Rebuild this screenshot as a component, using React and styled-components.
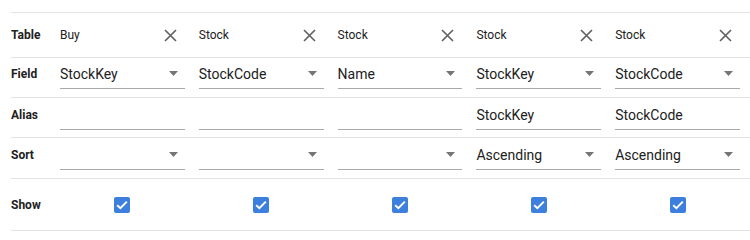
import React from "react";
import styled, { createGlobalStyle } from "styled-components";

const Global = createGlobalStyle`
  html, body { margin: 0; padding: 0; background: #fff; }
  body { font-family: Roboto, "Noto Sans", sans-serif; color: rgba(0,0,0,0.87); }
`;

const Grid = styled.div`
  margin: 12px 0 0 11px;
  width: 739px;
  border-bottom: 1px solid #e3e3e3;
`;

const Row = styled.div`
  display: grid;
  grid-template-columns: 35px repeat(5, 1fr);
  column-gap: 14px;
  padding-right: 10px;
  height: ${(p) => p.$h}px;
  border-top: 1px solid #e3e3e3;
  align-items: ${(p) => p.$align || "center"};
  padding-bottom: ${(p) => p.$pb || 0}px;
  box-sizing: border-box;
`;

const Label = styled.div`
  font-size: 12px;
  font-weight: 700;
  color: #212121;
`;

const InputLabel = styled(Label)`
  display: flex;
  align-items: center;
  height: 28px;
  padding-bottom: 2px;
  box-sizing: border-box;
`;

const Header = styled.div`
  display: flex;
  align-items: center;
  justify-content: space-between;
  font-size: 12px;
  color: #212121;
  padding-right: 8px;
`;

const CloseBtn = styled.svg`
  width: 13px;
  height: 13px;
  display: block;
`;

const Field = styled.div`
  display: flex;
  align-items: center;
  justify-content: space-between;
  height: 28px;
  padding: 0 7px 2px 0;
  box-sizing: border-box;
  border-bottom: 1px solid #a9a9a9;
  font-size: 14px;
  color: #212121;
`;

const Arrow = styled.svg`
  width: 9px;
  height: 5px;
  display: block;
`;

const CheckCell = styled.div`
  display: flex;
  justify-content: center;
`;

const Box = styled.div`
  width: 16px;
  height: 16px;
  border-radius: 2px;
  background: #3d7fdc;
  display: flex;
  align-items: center;
  justify-content: center;
`;

const columns = [
  { table: "Buy", field: "StockKey", alias: "", sort: "" },
  { table: "Stock", field: "StockCode", alias: "", sort: "" },
  { table: "Stock", field: "Name", alias: "", sort: "" },
  { table: "Stock", field: "StockKey", alias: "StockKey", sort: "Ascending" },
  { table: "Stock", field: "StockCode", alias: "StockCode", sort: "Ascending" },
];

const Close = () => (
  <CloseBtn viewBox="0 0 13 13">
    <path d="M1 1L12 12M12 1L1 12" stroke="#5f5f5f" strokeWidth="1.6" fill="none" />
  </CloseBtn>
);

const Drop = () => (
  <Arrow viewBox="0 0 9 5">
    <path d="M0 0h9L4.5 5z" fill="#757575" />
  </Arrow>
);

export default function App() {
  return (
    <>
      <Global />
      <Grid>
        <Row $h={45}>
          <Label>Table</Label>
          {columns.map((c, i) => (
            <Header key={i}>
              <span>{c.table}</span>
              <Close />
            </Header>
          ))}
        </Row>
        <Row $h={40} $align="end" $pb={8}>
          <InputLabel>Field</InputLabel>
          {columns.map((c, i) => (
            <Field key={i}>
              <span>{c.field}</span>
              <Drop />
            </Field>
          ))}
        </Row>
        <Row $h={40} $align="end" $pb={7}>
          <InputLabel>Alias</InputLabel>
          {columns.map((c, i) => (
            <Field key={i}>
              <span>{c.alias}</span>
            </Field>
          ))}
        </Row>
        <Row $h={41} $align="end" $pb={8}>
          <InputLabel>Sort</InputLabel>
          {columns.map((c, i) => (
            <Field key={i}>
              <span>{c.sort}</span>
              <Drop />
            </Field>
          ))}
        </Row>
        <Row $h={52}>
          <Label>Show</Label>
          {columns.map((c, i) => (
            <CheckCell key={i}>
              <Box>
                <svg width="12" height="10" viewBox="0 0 12 10">
                  <path d="M1.2 5.2L4.4 8.2L10.8 1.6" stroke="#fff" strokeWidth="2" fill="none" />
                </svg>
              </Box>
            </CheckCell>
          ))}
        </Row>
      </Grid>
    </>
  );
}
